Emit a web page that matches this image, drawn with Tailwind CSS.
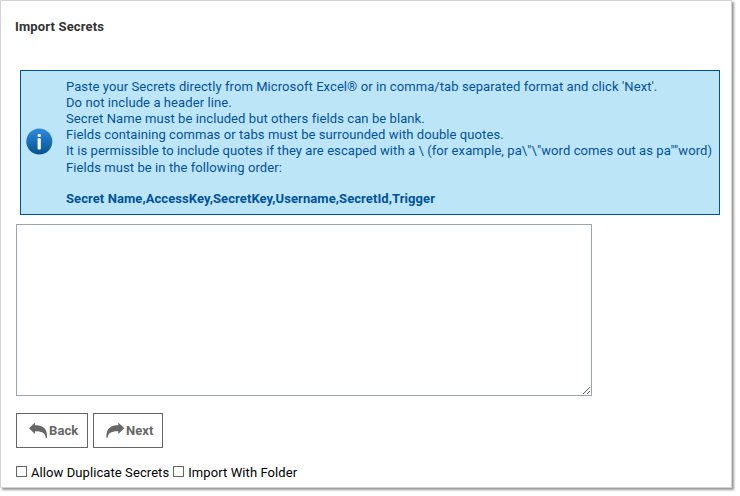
<!DOCTYPE html>
<html lang="en">
<head>
<meta charset="utf-8">
<title>Import Secrets</title>
<script src="https://cdn.jsdelivr.net/npm/@tailwindcss/browser@4"></script>
</head>
<body class="bg-white h-[496px] font-[Roboto,sans-serif] text-[13px] leading-[16px] tracking-[0.083px] text-black overflow-hidden">
<main class="w-[732px] h-[488px] border border-[#d3d3d3] bg-white shadow-[2px_2px_2px_0px_rgba(0,0,0,0.4)] flex flex-col items-start">
  <h1 class="ml-[14px] mt-[18px] font-bold text-[#333] whitespace-nowrap tracking-[0.15px]">Import Secrets</h1>
  <section class="ml-[19px] mt-[35px] w-[700px] h-[145px] border border-[#00529b] bg-[#bde5f8] text-[#00529b] flex items-start">
    <svg class="ml-[5px] mt-[57px] w-[27px] h-[27px] shrink-0" viewBox="0 0 27 27">
      <defs><linearGradient id="g" x1="0" y1="0" x2="0" y2="1"><stop offset="0" stop-color="#2e8be0"/><stop offset="1" stop-color="#07528f"/></linearGradient></defs>
      <circle cx="13.3" cy="13.5" r="13" fill="url(#g)"/>
      <rect x="11.6" y="6" width="3.2" height="3" rx="1" fill="#fff"/>
      <rect x="11.6" y="10.3" width="3.2" height="11.2" rx="1" fill="#fff"/>
    </svg>
    <div class="ml-[13px] mt-2 whitespace-nowrap">
      <p>Paste your Secrets directly from Microsoft Excel® or in comma/tab separated format and click 'Next'.</p>
      <p>Do not include a header line.</p>
      <p>Secret Name must be included but others fields can be blank.</p>
      <p>Fields containing commas or tabs must be surrounded with double quotes.</p>
      <p>It is permissible to include quotes if they are escaped with a \ (for example, pa\"\"word comes out as pa""word)</p>
      <p class="mt-px">Fields must be in the following order:</p>
      <p class="mt-[15px] font-bold">Secret Name,AccessKey,SecretKey,Username,SecretId,Trigger</p>
    </div>
  </section>
  <textarea class="ml-[15px] mt-[9px] w-[576px] h-[172px] shrink-0 border border-[#9aa5ae] bg-white block"></textarea>
  <div class="ml-[15px] mt-[17px] flex gap-[5px] text-[#666] font-bold">
    <button class="w-[72px] h-[35px] border border-[#666] flex items-center pl-3">
      <svg class="w-[19px] h-[17px] shrink-0" viewBox="0 0 19 17"><path d="M0 6.2 6 0.5V3.2C13 3.2 18.6 5.5 18 15.7H16.8C16.3 11 13 9 6 9.2V12Z" fill="#666"/></svg><span class="ml-[1px]">Back</span>
    </button>
    <button class="w-[70px] h-[35px] border border-[#666] flex items-center pl-3">
      <svg class="w-[19px] h-[17px] shrink-0" viewBox="0 0 19 17"><path d="M18.3 6.2 12.3 0.5V3.2C5.3 3.2 0 5.5 .4 15.7H1.6C2.1 11 5.3 9 12.3 9.2V12Z" fill="#666"/></svg><span class="ml-[1px]">Next</span>
    </button>
  </div>
  <div class="ml-[15px] mt-[17px] flex items-start whitespace-nowrap">
    <input id="dup" type="checkbox" class="appearance-none mt-px w-[11px] h-[11px] border border-[#666] bg-white"><label for="dup" class="ml-1">Allow Duplicate Secrets</label>
    <input id="folder" type="checkbox" class="appearance-none mt-px ml-1 w-[11px] h-[11px] border border-[#666] bg-white"><label for="folder" class="ml-1">Import With Folder</label>
  </div>
</main>
</body>
</html>
